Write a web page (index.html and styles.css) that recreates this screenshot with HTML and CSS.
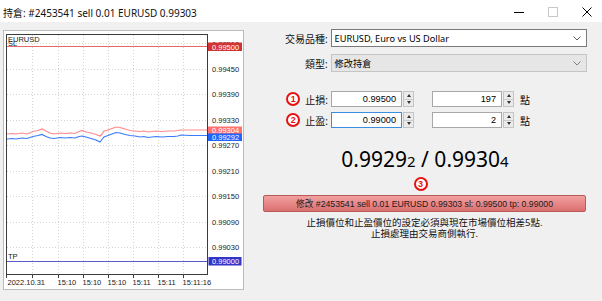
FILE: index.html
```html
<!DOCTYPE html>
<html lang="zh-Hant">
<head>
  <meta charset="UTF-8" />
  <title>持倉</title>
  <link rel="stylesheet" href="styles.css">
</head>
<body>

  <div class="titlebar">
    <span class="title">持倉: #2453541 sell 0.01 EURUSD 0.99303</span>
    <div class="controls">
      <svg class="ctl" width="10" height="10" viewBox="0 0 10 10"><line x1="0" y1="5.5" x2="10" y2="5.5" stroke="#000" stroke-width="1"/></svg>
      <svg class="ctl" width="10" height="10" viewBox="0 0 10 10"><rect x="0.5" y="0.5" width="9" height="9" fill="none" stroke="#c8c8c8"/></svg>
      <svg class="ctl" width="10" height="10" viewBox="0 0 10 10"><path d="M0.5 0.5 L9.5 9.5 M9.5 0.5 L0.5 9.5" stroke="#000" stroke-width="1"/></svg>
    </div>
  </div>

  <div class="content">
    <div class="chart">
      <svg width="241" height="260" viewBox="3 30 241 260">
        <rect x="3.5" y="30.5" width="240" height="259" fill="#fff" stroke="#bcbcbc"/>
        <g class="grid">
          <line x1="7" y1="43.5" x2="207" y2="43.5"/>
          <line x1="7" y1="69.5" x2="207" y2="69.5"/>
          <line x1="7" y1="94.5" x2="207" y2="94.5"/>
          <line x1="7" y1="120.5" x2="207" y2="120.5"/>
          <line x1="7" y1="145.5" x2="207" y2="145.5"/>
          <line x1="7" y1="171.5" x2="207" y2="171.5"/>
          <line x1="7" y1="196.5" x2="207" y2="196.5"/>
          <line x1="7" y1="222.5" x2="207" y2="222.5"/>
          <line x1="7" y1="247.5" x2="207" y2="247.5"/>
          <line x1="32.5" y1="35" x2="32.5" y2="274"/>
          <line x1="58.5" y1="35" x2="58.5" y2="274"/>
          <line x1="83.5" y1="35" x2="83.5" y2="274"/>
          <line x1="108.5" y1="35" x2="108.5" y2="274"/>
          <line x1="133.5" y1="35" x2="133.5" y2="274"/>
          <line x1="158.5" y1="35" x2="158.5" y2="274"/>
          <line x1="183.5" y1="35" x2="183.5" y2="274"/>
        </g>
        <g class="frame">
          <line x1="6.5" y1="34" x2="6.5" y2="278"/>
          <line x1="6" y1="34.5" x2="208" y2="34.5"/>
          <line x1="207.5" y1="34" x2="207.5" y2="275"/>
          <line x1="6" y1="274.5" x2="208" y2="274.5"/>
          <line x1="32.5" y1="274" x2="32.5" y2="278"/>
          <line x1="58.5" y1="274" x2="58.5" y2="278"/>
          <line x1="83.5" y1="274" x2="83.5" y2="278"/>
          <line x1="108.5" y1="274" x2="108.5" y2="278"/>
          <line x1="133.5" y1="274" x2="133.5" y2="278"/>
          <line x1="158.5" y1="274" x2="158.5" y2="278"/>
          <line x1="183.5" y1="274" x2="183.5" y2="278"/>
        </g>
        <line x1="7" y1="46.5" x2="207" y2="46.5" stroke="#e86a6a" stroke-width="1.2"/>
        <line x1="7" y1="261.5" x2="207" y2="261.5" stroke="#5a5ac8" stroke-width="1.2"/>
        <polyline class="ask" points="7,134 12,133.5 16,134 22,133 27,134 33,131.5 38,130.5 42,129 46,131 50,133 54,134 60,133 65,133.5 70,133 75,133.5 79,131.5 82,130.5 86,132 91,133 96,134.5 100,136 102,134 104,131 108,130 112,128.5 116,127 120,127.5 125,129 130,130.5 135,131 140,131.5 144,131 148,132 152,131.5 156,131 162,131.5 168,131 174,131 178,130.5 181,130 190,130 200,130 207,130"/>
        <polyline class="bid" points="7,139 12,138.5 16,139 22,138 27,138.5 33,136.5 38,135.5 42,134.5 46,136.5 50,138 54,138.5 60,137.5 65,138 70,137.5 75,138 79,136.5 82,136 86,137 91,138.5 96,140 100,142 102,139.5 104,137 108,135.5 112,134 116,132.5 120,133 125,134.5 130,135.5 135,136 140,137 144,136.5 148,137.5 152,137 156,136.5 162,137 168,136.5 174,136.5 178,136 181,135 190,135.5 200,135.5 207,135.5"/>
        <g class="axis">
          <text x="212" y="46.5">0.99510</text>
          <text x="212" y="72.2">0.99450</text>
          <text x="212" y="97.2">0.99390</text>
          <text x="212" y="123.2">0.99330</text>
          <text x="212" y="148.2">0.99270</text>
          <text x="212" y="174.2">0.99210</text>
          <text x="212" y="199.2">0.99150</text>
          <text x="212" y="225.2">0.99090</text>
          <text x="212" y="250.2">0.99030</text>
          <text x="7.5" y="284.5">2022.10.31</text>
          <text x="57.5" y="284.5">15:10</text>
          <text x="82.5" y="284.5">15:10</text>
          <text x="107.5" y="284.5">15:10</text>
          <text x="132.5" y="284.5">15:11</text>
          <text x="157.5" y="284.5">15:11</text>
          <text x="182.5" y="284.5">15:11:16</text>
          <text x="8" y="45.5">SL</text>
          <text x="8" y="41.5">EURUSD</text>
          <text x="8" y="259">TP</text>
        </g>
        <rect x="208" y="42.5" width="34" height="8.5" fill="#d23434"/>
        <rect x="208" y="126.5" width="34" height="7.5" fill="#ff7272"/>
        <rect x="208" y="133.5" width="34" height="7.5" fill="#1f64ff"/>
        <rect x="208.5" y="257" width="33" height="8.5" fill="#3434c8"/>
        <g class="tag">
          <text x="212" y="49.6">0.99500</text>
          <text x="212" y="133">0.99304</text>
          <text x="212" y="140">0.99292</text>
          <text x="212" y="264">0.99000</text>
        </g>
      </svg>
    </div>

    <div class="form">
      <div class="row row-symbol">
        <span class="label">交易品種:</span>
        <div class="select">
          <span>EURUSD, Euro vs US Dollar</span>
          <svg class="chev" width="8" height="5" viewBox="0 0 8 5"><path d="M0.5 0.5 L4 4 L7.5 0.5" fill="none" stroke="#606060"/></svg>
        </div>
      </div>
      <div class="row row-type">
        <span class="label">類型:</span>
        <div class="select select-off">
          <span>修改持倉</span>
          <svg class="chev" width="8" height="5" viewBox="0 0 8 5"><path d="M0.5 0.5 L4 4 L7.5 0.5" fill="none" stroke="#808080"/></svg>
        </div>
      </div>

      <div class="row row-sl">
        <span class="label"><span class="num">1</span>止損:</span>
        <div class="input">0.99500</div>
        <div class="spin"><span class="up"></span><span class="down"></span></div>
        <div class="input input-pts">197</div>
        <div class="spin"><span class="up"></span><span class="down"></span></div>
        <span class="unit">點</span>
      </div>
      <div class="row row-tp">
        <span class="label"><span class="num">2</span>止盈:</span>
        <div class="input input-focus">0.99000</div>
        <div class="spin"><span class="up"></span><span class="down"></span></div>
        <div class="input input-pts">2</div>
        <div class="spin"><span class="up"></span><span class="down"></span></div>
        <span class="unit">點</span>
      </div>

      <div class="quote">0.9929<small>2</small> / 0.9930<small>4</small></div>
      <span class="num num-3">3</span>

      <button class="modify">修改 #2453541 sell 0.01 EURUSD 0.99303 sl: 0.99500 tp: 0.99000</button>

      <div class="note">
        <span>止損價位和止盈價位的設定必須與現在市場價位相差5點.</span>
        <span>止損處理由交易商側執行.</span>
      </div>
    </div>
  </div>

</body>
</html>
```

FILE: styles.css
```css
body {
  font-family: 'Noto Sans', 'Noto Sans CJK TC', sans-serif;
  font-size: 10px;
  background: #f0f0f0;
  color: #000;
  margin: 0;
  padding: 0;
  width: 602px;
  height: 301px;
  overflow: hidden;
}
.titlebar {
  height: 22px;
  background: #fff;
  display: flex;
  align-items: center;
}
.title {
  padding-left: 3px;
  padding-top: 2px;
  font-size: 10px;
  color: #111;
}
.controls {
  margin-left: auto;
  display: flex;
  gap: 24px;
  padding-right: 10px;
  padding-top: 1px;
}
.ctl {
  display: block;
}
.content {
  display: flex;
  padding: 8px 0 0 3px;
  height: 271px;
}
.chart {
  width: 241px;
  height: 260px;
}
.chart svg {
  display: block;
}
.grid line {
  stroke: #d4d4d4;
  stroke-dasharray: 1 2;
}
.frame line {
  stroke: #3c3c3c;
}
.ask {
  fill: none;
  stroke: #ff8a8a;
  stroke-width: 1.2;
}
.bid {
  fill: none;
  stroke: #3a7aff;
  stroke-width: 1.2;
}
.axis text {
  font-family: 'Liberation Sans', sans-serif;
  font-size: 7.5px;
  fill: #1a1a1a;
}
.tag text {
  font-family: 'Liberation Sans', sans-serif;
  font-size: 7.5px;
  fill: #fff;
}
.form {
  margin-left: 19px;
  margin-top: -1px;
  width: 323px;
  display: flex;
  flex-direction: column;
}
.row {
  display: flex;
  align-items: center;
}
.label {
  width: 65px;
  margin-right: 3px;
  display: flex;
  justify-content: flex-end;
  align-items: center;
  color: #111;
}
.select {
  width: 253px;
  height: 16px;
  border: 1px solid #7a7a7a;
  background: #fff;
  display: flex;
  align-items: center;
  padding-left: 3px;
  margin-right: -1px;
  font-size: 9.2px;
}
.select .chev {
  margin-left: auto;
  margin-right: 5px;
}
.row-type {
  margin-top: 7px;
}
.select-off {
  background: #e6e6e6;
  border-color: #c4c4c4;
}
.row-sl {
  margin-top: 19px;
}
.row-tp {
  margin-top: 5px;
}
.input {
  width: 64px;
  height: 14px;
  border: 1px solid #a8a8a8;
  background: #fff;
  text-align: right;
  padding-right: 5px;
  line-height: 14px;
  font-family: 'Liberation Sans', sans-serif;
  font-size: 9.2px;
}
.input-pts {
  width: 63px;
  margin-left: 18px;
}
.input-focus {
  border-color: #3c8ee0;
}
.spin {
  width: 11px;
  height: 16px;
  margin-left: 1px;
  display: flex;
  flex-direction: column;
  border: 1px solid #c4c4c4;
  box-sizing: border-box;
  background: #ebebeb;
}
.spin span {
  flex: 1;
  display: flex;
  align-items: center;
  justify-content: center;
}
.spin .up {
  border-bottom: 1px solid #cccccc;
}
.spin .up::after {
  content: "";
  border-left: 2.5px solid transparent;
  border-right: 2.5px solid transparent;
  border-bottom: 3px solid #333;
}
.spin .down::after {
  content: "";
  border-left: 2.5px solid transparent;
  border-right: 2.5px solid transparent;
  border-top: 3px solid #333;
}
.unit {
  margin-left: 6px;
}
.num {
  width: 10px;
  height: 10px;
  border: 2px solid #e81010;
  border-radius: 50%;
  background: #fff;
  color: #e81010;
  font-family: 'Liberation Sans', sans-serif;
  font-weight: bold;
  font-size: 9px;
  line-height: 10px;
  text-align: center;
  margin-right: 5px;
}
.quote {
  margin-top: 19px;
  font-size: 21px;
  line-height: 24px;
  text-align: center;
  padding-left: 1px;
}
.quote small {
  font-size: 15px;
}
.num-3 {
  align-self: center;
  margin: 4px 8px 0 0;
}
.modify {
  margin-top: 4px;
  height: 17px;
  width: 323px;
  border: 1px solid #b85a5a;
  border-radius: 2px;
  background: linear-gradient(#f2a0a0, #dc7070);
  font-family: 'Liberation Sans', 'Noto Sans CJK TC', sans-serif;
  font-size: 8.7px;
  color: #1a1a1a;
  padding: 0;
  line-height: 14px;
}
.note {
  margin-top: 6px;
  display: flex;
  flex-direction: column;
  align-items: center;
  font-size: 9.5px;
  color: #111;
}
.note span {
  display: block;
  height: 10.5px;
  line-height: 10.5px;
}
```
